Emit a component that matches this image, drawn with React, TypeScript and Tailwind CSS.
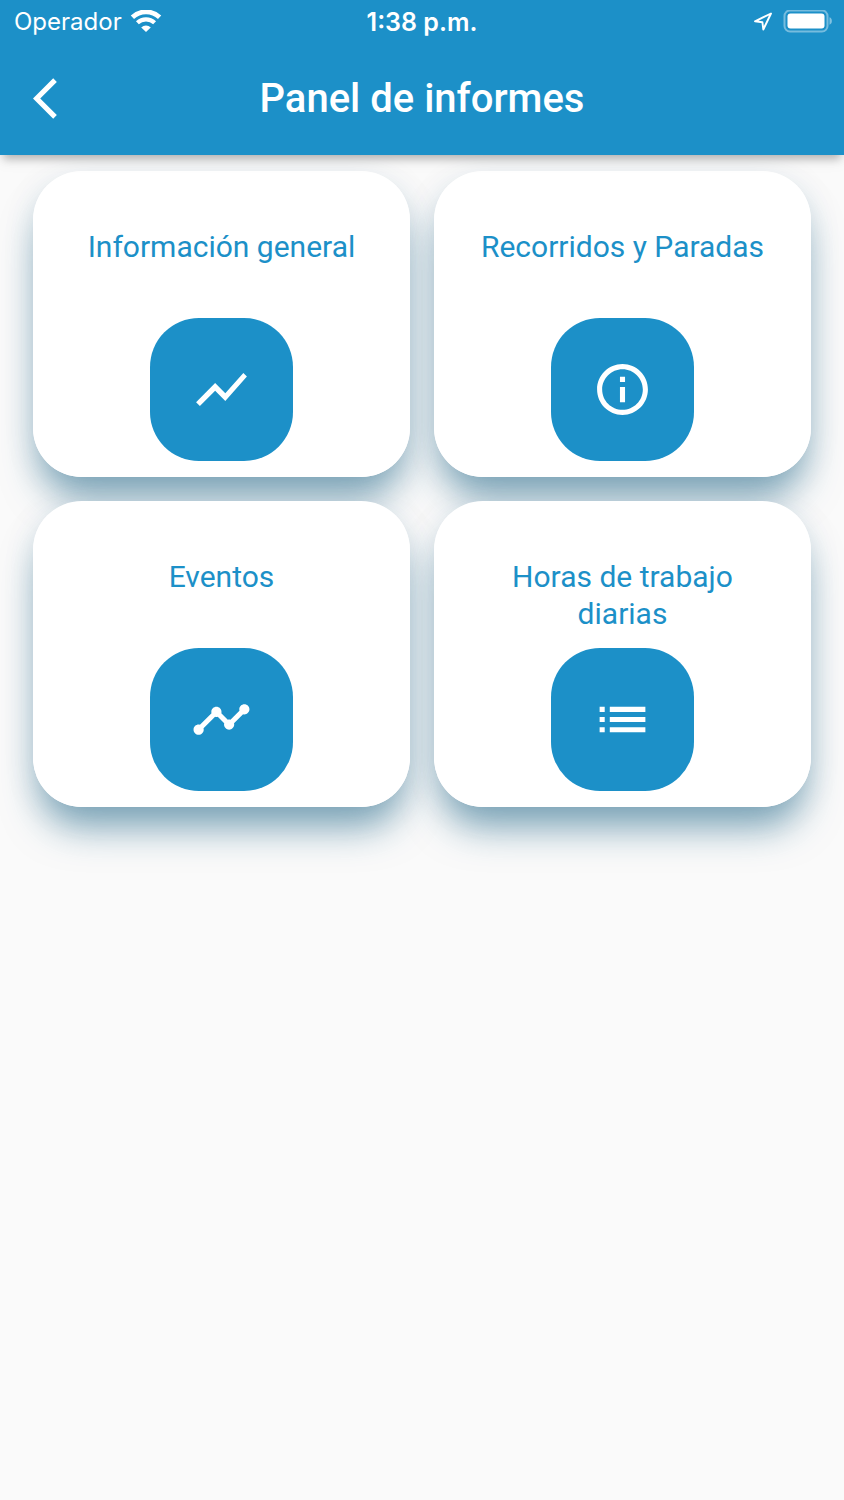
import type { IconType } from 'react-icons';
import { MdArrowBackIos, MdInfoOutline, MdList, MdShowChart, MdTimeline } from 'react-icons/md';

type Report = {
  id: string;
  title: string;
  icon: IconType;
};

type ReportCardProps = {
  report: Report;
};

const reports: Report[] = [
  { id: 'general', title: 'Información general', icon: MdShowChart },
  { id: 'routes', title: 'Recorridos y Paradas', icon: MdInfoOutline },
  { id: 'events', title: 'Eventos', icon: MdTimeline },
  { id: 'hours', title: 'Horas de trabajo diarias', icon: MdList },
];

function WifiIcon() {
  return (
    <svg viewBox="0 0 32 24" className="h-6 w-8" fill="none" stroke="currentColor" aria-hidden="true">
      <path d="M2.4 7.2a20 20 0 0 1 27.2 0" strokeWidth="4.8" />
      <path d="M7.4 12.8a12.6 12.6 0 0 1 17.2 0" strokeWidth="4.2" />
      <path d="M16 22l-4.800-4.500a7 7 0 0 1 9.600 0z" fill="currentColor" stroke="none" />
    </svg>
  );
}

function LocationIcon() {
  return (
    <svg viewBox="0 0 20 20" className="size-5" fill="none" stroke="currentColor" strokeWidth="1.9" strokeLinejoin="round" aria-hidden="true">
      <path d="M18 1.500L2 9.300l7.400.9.900 7.300z" />
    </svg>
  );
}

function BatteryIcon() {
  return (
    <svg viewBox="0 0 49 24" className="h-6 w-[49px]" aria-hidden="true">
      <rect x="1.5" y="0.5" width="43" height="21" rx="5.5" fill="none" stroke="currentColor" strokeWidth="2" opacity="0.4" />
      <rect x="4.5" y="3.5" width="37" height="15" rx="3" fill="currentColor" />
      <path d="M46.5 7.300c3.200 1.200 3.200 6.200 0 7.400z" fill="currentColor" opacity="0.45" />
    </svg>
  );
}

function StatusBar() {
  return (
    <div className="grid grid-cols-3 items-center h-11 px-3 font-['Inter',sans-serif]">
      <div className="flex items-center gap-2 text-2xl">
        <span className="pl-0.5">Operador</span>
        <WifiIcon />
      </div>
      <span className="text-center text-[25px] leading-8 font-semibold">1:38 p.m.</span>
      <div className="flex items-center justify-end gap-2.5">
        <LocationIcon />
        <BatteryIcon />
      </div>
    </div>
  );
}

function ReportCard({ report }: ReportCardProps) {
  const Icon = report.icon;

  // The shadow sits on a layer behind the grid so it never falls on a neighbouring card
  return (
    <button
      type="button"
      className="relative flex flex-col items-center justify-between h-[306px] px-10 pt-[57px] pb-4 rounded-[49px] bg-white text-[#1c90c8] before:absolute before:inset-0 before:-z-10 before:rounded-[49px] before:shadow-[0_28px_38px_-8px_rgba(20,95,130,0.54),0_6px_32px_0_rgba(20,80,115,0.1)]"
    >
      <span className="text-[30px] leading-[37px]">{report.title}</span>
      <span className="flex items-center justify-center size-[143px] rounded-[49px] bg-[#1c90c8] text-white">
        <Icon className="size-[61px]" />
      </span>
    </button>
  );
}

export default function App() {
  return (
    <div className="min-h-screen bg-[#fafafa] font-['Roboto',sans-serif]">
      <header className="relative z-10 bg-[#1c90c8] text-white shadow-[0_8px_8px_-4px_rgba(0,0,0,0.22),0_3px_16px_0_rgba(0,0,0,0.1)]">
        <StatusBar />
        <div className="grid grid-cols-[49px_1fr_49px] items-center h-[111px] px-[33px] pb-0.5">
          <button type="button" aria-label="Volver">
            <MdArrowBackIos className="size-[49px]" />
          </button>
          <h1 className="text-center text-[40px] leading-[48px] font-medium">Panel de informes</h1>
        </div>
      </header>

      <main className="isolate grid grid-cols-2 gap-6 px-[33px] pt-4 pb-16">
        {reports.map(report => <ReportCard key={report.id} report={report} />)}
      </main>
    </div>
  );
}
